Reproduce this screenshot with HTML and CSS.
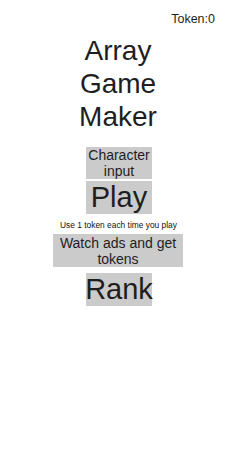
FILE: index.html
```html
<!DOCTYPE html>
<html lang="en">
<head>
  <meta charset="UTF-8" />
  <meta name="viewport" content="width=device-width, initial-scale=1.0" />
  <title>Array Game Maker</title>
  <link rel="stylesheet" href="styles.css">
</head>
<body>
  <div class="screen">
    <div class="token-bar">Token:0</div>
    <h1 class="title">Array<br>Game<br>Maker</h1>
    <div class="menu">
      <div class="btn btn-small">Character<br>input</div>
      <div class="btn btn-big btn-play">Play</div>
      <div class="note">Use 1 token each time you play</div>
      <div class="btn btn-small btn-wide">Watch ads and get<br>tokens</div>
      <div class="btn btn-big btn-rank">Rank</div>
    </div>
  </div>
</body>
</html>
```
FILE: styles.css
```css
body {
  margin: 0;
  font-family: "Liberation Sans", Arial, sans-serif;
  background: #fff;
  color: #1e1e1e;
}
.screen {
  width: 236px;
  height: 472px;
  display: flex;
  flex-direction: column;
}
.token-bar {
  padding: 12px 21px 0 0;
  font-size: 12.5px;
  line-height: 14px;
  text-align: right;
}
.title {
  margin: 8px 0 0;
  font-size: 28px;
  font-weight: normal;
  line-height: 33px;
  text-align: center;
}
.menu {
  margin-top: 14px;
  display: flex;
  flex-direction: column;
  align-items: center;
}
.btn {
  width: 66px;
  background: #cbcbcb;
  display: flex;
  align-items: center;
  justify-content: center;
  text-align: center;
  margin-left: 2px;
}
.btn-small {
  height: 32px;
  font-size: 14px;
  line-height: 16px;
}
.btn-big {
  height: 33px;
  font-size: 29px;
  line-height: 33px;
}
.btn-play {
  margin-top: 2px;
}
.note {
  margin-top: 6px;
  font-size: 8.4px;
  line-height: 10px;
  margin-left: 1px;
  color: #111;
}
.btn-wide {
  width: 130px;
  height: 33px;
  margin-top: 4px;
  margin-left: 0;
}
.btn-rank {
  margin-top: 6px;
}
```
